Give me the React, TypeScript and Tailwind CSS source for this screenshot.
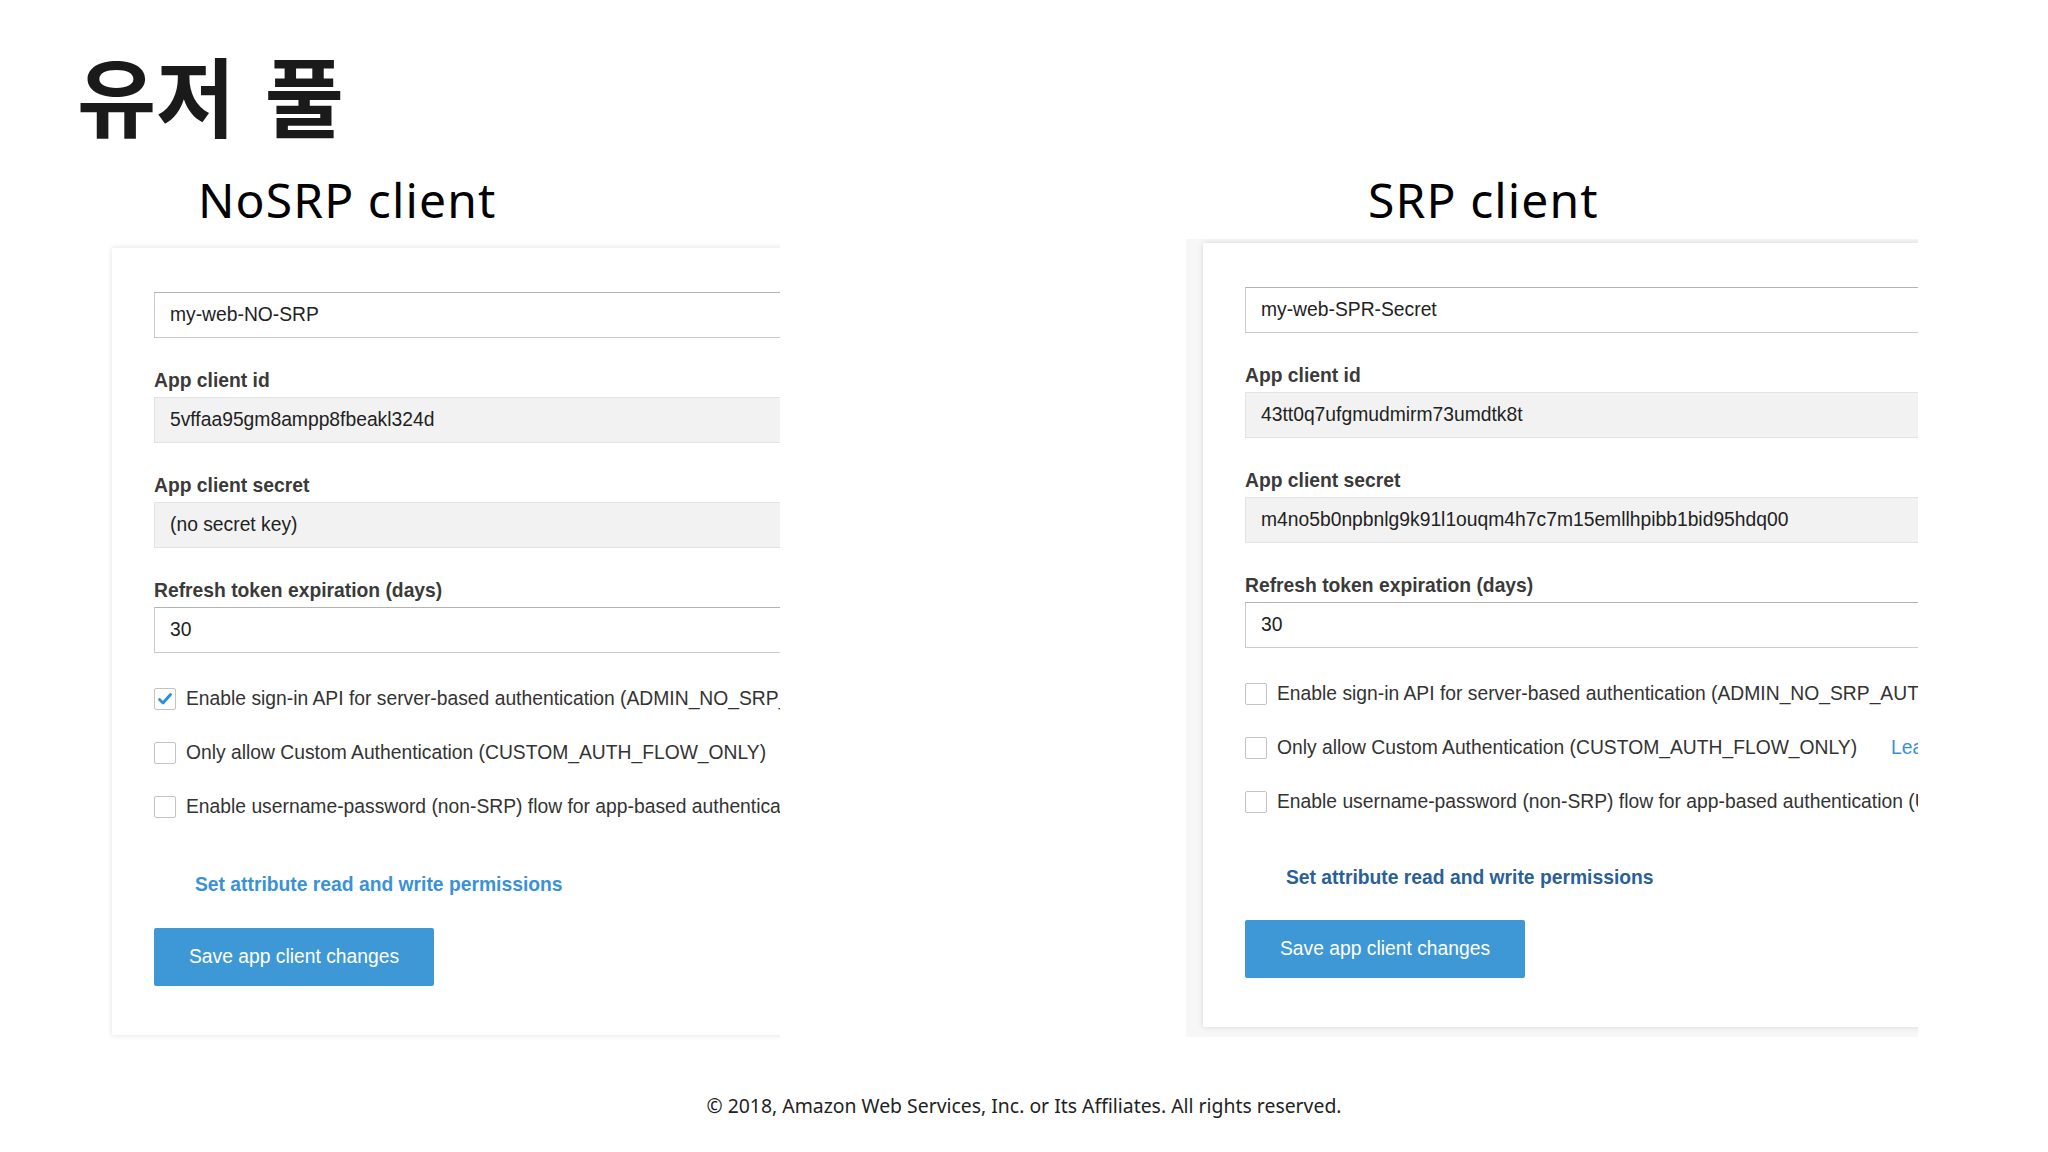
import React from 'react';

interface ClientCardProps {
  name: string;
  clientId: string;
  secret: string;
  adminChecked: boolean;
  linkClass: string;
  showLearnMore: boolean;
  tight?: boolean;
}

const Field: React.FC<{ value: string; readOnly?: boolean }> = ({ value, readOnly }) => (
  <div
    className={
      readOnly
        ? 'h-[46px] flex items-center pl-[15px] bg-[#f2f2f2] border border-[#e3e3e3] text-[19.3px] text-[#222] whitespace-nowrap'
        : 'h-[46px] flex items-center pl-[15px] bg-white border border-[#cacaca] border-t-[#b3b3b3] text-[19.3px] text-[#222] whitespace-nowrap'
    }
  >
    {value}
  </div>
);

const Label: React.FC<{ text: string }> = ({ text }) => (
  <div className="mt-[31px] mb-[4px] leading-[24px] text-[19.3px] font-bold text-[#3a3a3a]">{text}</div>
);

const CheckRow: React.FC<{ checked?: boolean; text: string; extra?: React.ReactNode }> = ({ checked, text, extra }) => (
  <div className="h-[54px] flex items-center whitespace-nowrap">
    <div className="w-[22px] h-[22px] shrink-0 rounded-[2px] border border-[#c4c4c4] bg-white flex items-center justify-center">
      {checked && (
        <svg width="16" height="16" viewBox="0 0 16 16">
          <path d="M2.5 8.5 L6 12 L13.5 3.5" fill="none" stroke="#2b8ed6" strokeWidth="2.8" strokeLinecap="round" strokeLinejoin="round" />
        </svg>
      )}
    </div>
    <span className="ml-[10px] text-[19.3px] text-[#333]">{text}</span>
    {extra}
  </div>
);

const ClientCard: React.FC<ClientCardProps> = ({ name, clientId, secret, adminChecked, linkClass, showLearnMore, tight }) => (
  <div className="w-[1000px] bg-white shadow-[0_0_6px_rgba(0,0,0,0.13)] pl-[42px] pt-[44px] font-['Liberation_Sans',Arial,sans-serif]">
    <Field value={name} />
    <Label text="App client id" />
    <Field value={clientId} readOnly />
    <Label text="App client secret" />
    <Field value={secret} readOnly />
    <Label text="Refresh token expiration (days)" />
    <Field value="30" />
    <div className="mt-[19px]">
      <CheckRow checked={adminChecked} text="Enable sign-in API for server-based authentication (ADMIN_NO_SRP_AUTH)" />
      <CheckRow
        text="Only allow Custom Authentication (CUSTOM_AUTH_FLOW_ONLY)"
        extra={showLearnMore ? <span className="ml-[34px] text-[19.3px] text-[#3b8fd6]">Learn more</span> : null}
      />
      <CheckRow text="Enable username-password (non-SRP) flow for app-based authentication (USER_PASSWORD_AUTH)" />
    </div>
    <div className={`${tight ? 'mt-[37px]' : 'mt-[39px]'} ml-[41px] leading-[24px] text-[19.3px] font-bold ${linkClass}`}>
      Set attribute read and write permissions
    </div>
    <button className={`${tight ? 'mt-[30px]' : 'mt-[31px]'} h-[58px] px-[35px] rounded-[2px] bg-[#3f98d6] text-white text-[19.3px]`}>
      Save app client changes
    </button>
    <div className="h-[49px]" />
  </div>
);

export default function App() {
  return (
    <div className="w-[2048px] h-[1152px] bg-white flex flex-col overflow-hidden">
      <h1 className="mt-[51px] ml-[77px] h-[82px] leading-none text-[86px] font-bold text-[#1a1a1a] [word-spacing:10px] font-['Noto_Sans_CJK_KR','Noto_Sans',sans-serif]">
        유저 풀
      </h1>
      <div className="mt-[43px] flex items-start">
        <div className="ml-[108px] w-[672px]">
          <div className="ml-[90px] leading-none text-[48px] tracking-[1.1px] text-black font-['Noto_Sans',sans-serif]">NoSRP client</div>
          <div className="mt-[16px] overflow-hidden pl-[4px] pt-[8px] pb-[6px]">
            <ClientCard
              name="my-web-NO-SRP"
              clientId="5vffaa95gm8ampp8fbeakl324d"
              secret="(no secret key)"
              adminChecked
              linkClass="text-[#3a92d6]"
              showLearnMore={false}
            />
          </div>
        </div>
        <div className="ml-[406px] w-[732px]">
          <div className="ml-[182px] leading-none text-[48px] tracking-[1.1px] text-black font-['Noto_Sans',sans-serif]">SRP client</div>
          <div className="mt-[15px] overflow-hidden bg-[#f7f7f8] pl-[17px] pt-[4px] pb-[10px]">
            <ClientCard
              name="my-web-SPR-Secret"
              clientId="43tt0q7ufgmudmirm73umdtk8t"
              secret="m4no5b0npbnlg9k91l1ouqm4h7c7m15emllhpibb1bid95hdq00"
              adminChecked={false}
              linkClass="text-[#2a5f98]"
              showLearnMore
              tight
            />
          </div>
        </div>
      </div>
      <div className="mt-[53px] text-center leading-[24px] text-[19.4px] text-[#222] font-['Noto_Sans',sans-serif]">
        © 2018, Amazon Web Services, Inc. or Its Affiliates. All rights reserved.
      </div>
    </div>
  );
}
